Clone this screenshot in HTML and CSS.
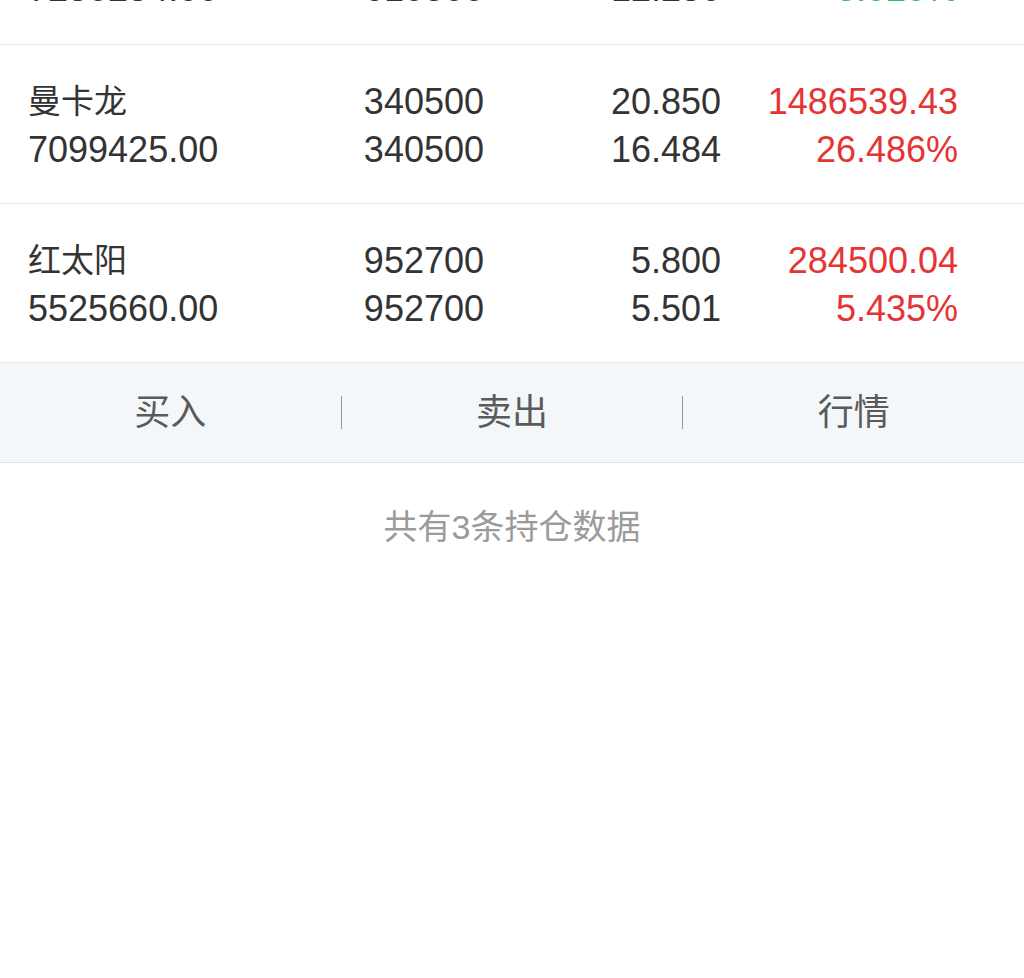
FILE: index.html
```html
<!DOCTYPE html>
<html lang="zh-CN">
<head>
<meta charset="utf-8">
<title>持仓</title>
<link rel="stylesheet" href="styles.css">
</head>
<body>
<div class="page">
  <div class="list">
    <div class="row row-first">
      <div class="cell c1"><div class="name">海澜之家</div><div>7250254.00</div></div>
      <div class="cell num"><div>610300</div><div>610300</div></div>
      <div class="cell num"><div>11.880</div><div>12.250</div></div>
      <div class="cell num down"><div>-225811.00</div><div>-3.020%</div></div>
    </div>
    <div class="row">
      <div class="cell c1"><div class="name">曼卡龙</div><div>7099425.00</div></div>
      <div class="cell num"><div>340500</div><div>340500</div></div>
      <div class="cell num"><div>20.850</div><div>16.484</div></div>
      <div class="cell num up"><div>1486539.43</div><div>26.486%</div></div>
    </div>
    <div class="row">
      <div class="cell c1"><div class="name">红太阳</div><div>5525660.00</div></div>
      <div class="cell num"><div>952700</div><div>952700</div></div>
      <div class="cell num"><div>5.800</div><div>5.501</div></div>
      <div class="cell num up"><div>284500.04</div><div>5.435%</div></div>
    </div>
  </div>
  <div class="actions">
    <div class="action">买入</div>
    <span class="divider"></span>
    <div class="action">卖出</div>
    <span class="divider"></span>
    <div class="action">行情</div>
  </div>
  <div class="summary">共有3条持仓数据</div>
</div>
</body>
</html>
```
FILE: styles.css
```css
html, body {
  margin: 0;
  padding: 0;
  background: #ffffff;
}
body {
  font-family: "Liberation Sans", "Noto Sans CJK SC", sans-serif;
  color: #333333;
  overflow: hidden;
}
.page {
  width: 1024px;
  height: 978px;
  overflow: hidden;
}
.list {
  margin-top: -114px;
}
.row {
  display: grid;
  grid-template-columns: 236px 220px 237px 237px;
  padding: 33px 66px 29px 28px;
  height: 96px;
  border-bottom: 1px solid #e9e9e9;
  font-size: 36px;
  line-height: 48px;
}
.row-first {
  padding-top: 31px;
  padding-bottom: 31px;
}
.cell {
  white-space: nowrap;
}
.c1 {
  text-align: left;
}
.name {
  font-size: 33px;
  height: 48px;
}
.num {
  text-align: right;
}
.up {
  color: #e53434;
}
.down {
  color: #3cb85a;
}
.actions {
  display: flex;
  align-items: center;
  height: 99px;
  background: #f4f7f9;
  border-bottom: 1px solid #e3e5e7;
}
.action {
  flex: 1;
  text-align: center;
  font-size: 36px;
  line-height: 48px;
  color: #5a5a5a;
}
.divider {
  width: 1px;
  height: 33px;
  background: #9a9a9a;
}
.summary {
  padding-top: 44px;
  text-align: center;
  font-size: 34px;
  line-height: 40px;
  color: #9b9b9b;
}
```
